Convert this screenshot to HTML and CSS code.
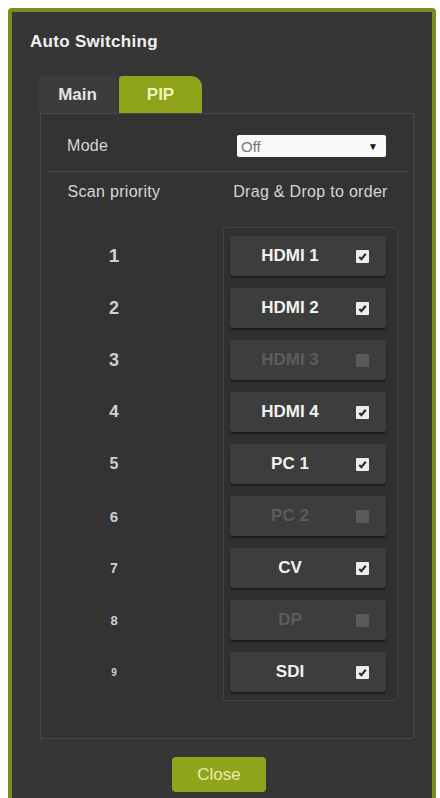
FILE: index.html
```html
<!DOCTYPE html>
<html lang="en">
<head>
    <meta charset="UTF-8">
    <meta name="viewport" content="width=device-width, initial-scale=1.0">
    <title>Auto Switching</title>
    <link rel="stylesheet" href="styles.css">
</head>
<body>
    <div class="dialog">
        <h2 class="dialog-title">Auto Switching</h2>

        <!-- Tabs -->
        <div class="tabs">
            <div class="tab">Main</div>
            <div class="tab active">PIP</div>
        </div>

        <div class="panel">
            <!-- Mode selector -->
            <div class="mode-row">
                <span class="label">Mode</span>
                <div class="select">
                    <span>Off</span>
                    <span class="arrow">&#9660;</span>
                </div>
            </div>

            <div class="columns head">
                <span class="label">Scan priority</span>
                <span class="label">Drag &amp; Drop to order</span>
            </div>

            <!-- Priority list -->
            <div class="columns">
                <div class="numbers">
                    <span>1</span><span>2</span><span>3</span>
                    <span>4</span><span>5</span><span>6</span>
                    <span>7</span><span>8</span><span>9</span>
                </div>
                <div class="sources">
                    <div class="source"><span class="name">HDMI 1</span><span class="check on"><svg viewBox="0 0 12 12"><path d="M3 6.5l2 2 4-5"/></svg></span></div>
                    <div class="source"><span class="name">HDMI 2</span><span class="check on"><svg viewBox="0 0 12 12"><path d="M3 6.5l2 2 4-5"/></svg></span></div>
                    <div class="source off"><span class="name">HDMI 3</span><span class="check"></span></div>
                    <div class="source"><span class="name">HDMI 4</span><span class="check on"><svg viewBox="0 0 12 12"><path d="M3 6.5l2 2 4-5"/></svg></span></div>
                    <div class="source"><span class="name">PC 1</span><span class="check on"><svg viewBox="0 0 12 12"><path d="M3 6.5l2 2 4-5"/></svg></span></div>
                    <div class="source off"><span class="name">PC 2</span><span class="check"></span></div>
                    <div class="source"><span class="name">CV</span><span class="check on"><svg viewBox="0 0 12 12"><path d="M3 6.5l2 2 4-5"/></svg></span></div>
                    <div class="source off"><span class="name">DP</span><span class="check"></span></div>
                    <div class="source"><span class="name">SDI</span><span class="check on"><svg viewBox="0 0 12 12"><path d="M3 6.5l2 2 4-5"/></svg></span></div>
                </div>
            </div>
        </div>

        <div class="actions">
            <button class="btn-close">Close</button>
        </div>
    </div>
</body>
</html>
```

FILE: styles.css
```css
/* Dark dialog with olive accents */
body {
    margin: 0;
    background-color: #ffffff;
    font-family: "Liberation Sans", Arial, sans-serif;
}

.dialog {
    box-sizing: border-box;
    width: 428px;
    height: 800px;
    margin: 8px 0 0 8px;
    border: 4px solid #7b8a22;
    border-radius: 4px;
    background-color: #363636;
}

.dialog-title {
    margin: 0;
    padding: 22px 0 0 18px;
    font-size: 17px;
    line-height: 16px;
    font-weight: bold;
    letter-spacing: 0.3px;
    color: #f0f0f0;
}

/* Tabs */
.tabs {
    display: flex;
    gap: 2px;
    margin: 26px 0 0 26px;
}

.tab {
    width: 79px;
    height: 37px;
    display: flex;
    align-items: center;
    justify-content: center;
    font-size: 17px;
    font-weight: bold;
    color: #e4e4e4;
    background-color: #3c3c3c;
    border-radius: 3px 3px 0 0;
}

.tab.active {
    width: 83px;
    background-color: #8fa31b;
    color: #eef3b4;
    border-radius: 3px 11px 0 0;
}

/* Panel under the tabs */
.panel {
    box-sizing: border-box;
    width: 374px;
    height: 626px;
    margin-left: 28px;
    border: 1px solid #474747;
    background-color: #333333;
}

.label {
    font-size: 16px;
    letter-spacing: 0.3px;
    color: #d6d6d6;
}

.mode-row {
    display: flex;
    align-items: center;
    padding: 21px 0 14px 19px;
    margin: 0 4px 0 7px;
    border-bottom: 1px solid #4a4a4a;
}

.mode-row .label {
    width: 170px;
}

.select {
    box-sizing: border-box;
    width: 149px;
    height: 22px;
    display: flex;
    align-items: center;
    justify-content: space-between;
    padding: 0 8px 0 4px;
    background-color: #fafafa;
    border-radius: 2px;
    font-size: 15px;
    color: #777;
}

.select .arrow {
    font-size: 10px;
    color: #111;
}

/* Two column grid: priority numbers and source list */
.columns {
    display: grid;
    grid-template-columns: 146px 175px;
    column-gap: 36px;
}

.columns.head {
    padding: 11px 0 26px;
    line-height: 18px;
    text-align: center;
}

.numbers {
    display: flex;
    flex-direction: column;
    gap: 12px;
    padding-top: 9px;
}

.numbers span {
    height: 40px;
    display: flex;
    align-items: center;
    justify-content: center;
    font-weight: bold;
    color: #d0d0d0;
}

.numbers span:nth-child(1) { font-size: 19px; }
.numbers span:nth-child(2) { font-size: 18px; }
.numbers span:nth-child(3) { font-size: 18px; }
.numbers span:nth-child(4) { font-size: 17px; }
.numbers span:nth-child(5) { font-size: 16px; }
.numbers span:nth-child(6) { font-size: 15px; }
.numbers span:nth-child(7) { font-size: 14px; }
.numbers span:nth-child(8) { font-size: 13px; }
.numbers span:nth-child(9) { font-size: 10px; }

.sources {
    display: flex;
    flex-direction: column;
    gap: 12px;
    padding: 8px 11px 8px 6px;
    border: 1px solid #444;
    border-radius: 4px;
    background-color: #303030;
}

.source {
    height: 40px;
    display: flex;
    align-items: center;
    gap: 6px;
    padding-right: 17px;
    background-color: #3d3d3d;
    border-radius: 3px;
    box-shadow: 0 2px 2px rgba(0, 0, 0, 0.45);
}

.source .name {
    flex: 1;
    text-align: center;
    font-size: 17px;
    font-weight: bold;
    color: #f2f2f2;
}

.check {
    width: 13px;
    height: 13px;
    border-radius: 1px;
    background-color: #5a5a5a;
}

.check.on {
    background-color: #ececec;
}

.check svg {
    display: block;
    width: 13px;
    height: 13px;
    fill: none;
    stroke: #2a2a2a;
    stroke-width: 2;
}

.source.off .name {
    color: #5c5c5c;
}

/* Close button */
.actions {
    padding: 18px 0 0 160px;
}

.btn-close {
    width: 94px;
    height: 35px;
    border: none;
    border-radius: 4px;
    background-color: #8fa31b;
    color: #e8ecb2;
    font-family: "Liberation Sans", Arial, sans-serif;
    font-size: 17px;
}
```
